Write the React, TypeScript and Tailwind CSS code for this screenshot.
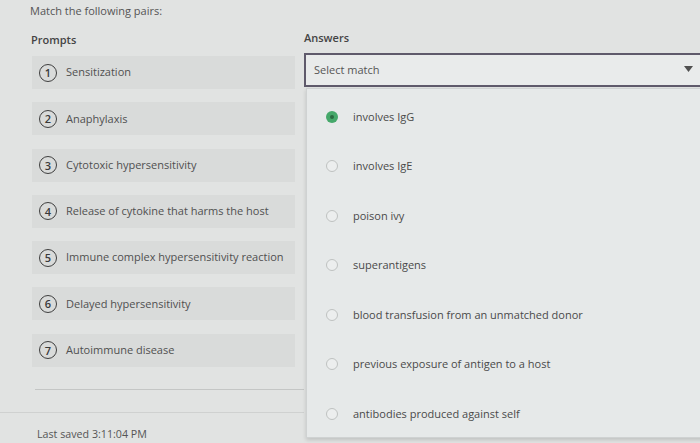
const prompts = [
  "Sensitization",
  "Anaphylaxis",
  "Cytotoxic hypersensitivity",
  "Release of cytokine that harms the host",
  "Immune complex hypersensitivity reaction",
  "Delayed hypersensitivity",
  "Autoimmune disease",
];

const answers = [
  "involves IgG",
  "involves IgE",
  "poison ivy",
  "superantigens",
  "blood transfusion from an unmatched donor",
  "previous exposure of antigen to a host",
  "antibodies produced against self",
];

function PromptRow({ n, label }: { n: number; label: string }) {
  return (
    <div className="flex items-center h-[33px] w-[263px] bg-[#d9dbda] pl-[7px] gap-[9px]">
      <span className="flex items-center justify-center w-[18px] h-[18px] rounded-full border-[1.5px] border-[#3f3f3f] text-[11px] font-semibold text-[#3a3a3a] leading-none">
        {n}
      </span>
      <span className="text-[11px] text-[#505050]">{label}</span>
    </div>
  );
}

function Radio({ checked }: { checked?: boolean }) {
  if (checked)
    return (
      <span className="flex items-center justify-center w-[12px] h-[12px] rounded-full bg-[#45a86a]">
        <span className="w-[4px] h-[4px] rounded-full bg-[#2a6b41]" />
      </span>
    );
  return <span className="w-[12px] h-[12px] rounded-full border border-[#bfc2c1] bg-[#eceeee]" />;
}

export default function App() {
  return (
    <div
      className="relative w-[700px] h-[443px] overflow-hidden bg-[#e1e3e2] text-[#505050]"
      style={{ fontFamily: '"Open Sans", "Noto Sans", sans-serif' }}
    >
      <div className="pl-[30px] pt-[3px] text-[11px] leading-[16px] text-[#555]">
        Match the following pairs:
      </div>
      <div className="flex mt-[11px]">
        <div className="w-[304px] shrink-0">
          <div className="pl-[31px] pt-[2px] text-[11px] leading-[16px] font-semibold text-[#444]">
            Prompts
          </div>
          <div className="pl-[32px] mt-[8px] flex flex-col gap-[13.3px]">
            {prompts.map((p, i) => (
              <PromptRow key={p} n={i + 1} label={p} />
            ))}
          </div>
          <div className="ml-[35px] mt-[22px] h-px bg-[#c4c6c5]" />
          <div className="mt-[22px] h-px bg-[#cfd1d0]" />
          <div className="pl-[37px] mt-[13px] text-[10.7px] leading-[16px] text-[#555]">
            Last saved 3:11:04 PM
          </div>
        </div>
        <div className="flex-1">
          <div className="text-[11px] leading-[16px] font-semibold text-[#444]">Answers</div>
          <div className="mt-[7px] w-[400px] h-[34px] border-2 border-[#5f5a6b] bg-[#e9ebeb] flex items-center pl-[8px]">
            <span className="text-[11px] text-[#555]">Select match</span>
            <svg className="absolute left-[684px] top-[66px]" width="9" height="6" viewBox="0 0 9 6">
              <path d="M0 0 L9 0 L4.5 6 Z" fill="#505050" />
            </svg>
          </div>
        </div>
      </div>

      <div className="absolute left-[306px] top-[88px] w-[400px] h-[350px] bg-[#e6e9e9] border border-[#cfd2d2] shadow-[0_2px_4px_rgba(0,0,0,0.15)] pt-[3px]">
        {answers.map((a, i) => (
          <div key={a} className="flex items-center h-[49.5px] pl-[19px] gap-[15px]">
            <Radio checked={i === 0} />
            <span className="text-[11px] text-[#4a4a4a]">{a}</span>
          </div>
        ))}
      </div>
    </div>
  );
}
